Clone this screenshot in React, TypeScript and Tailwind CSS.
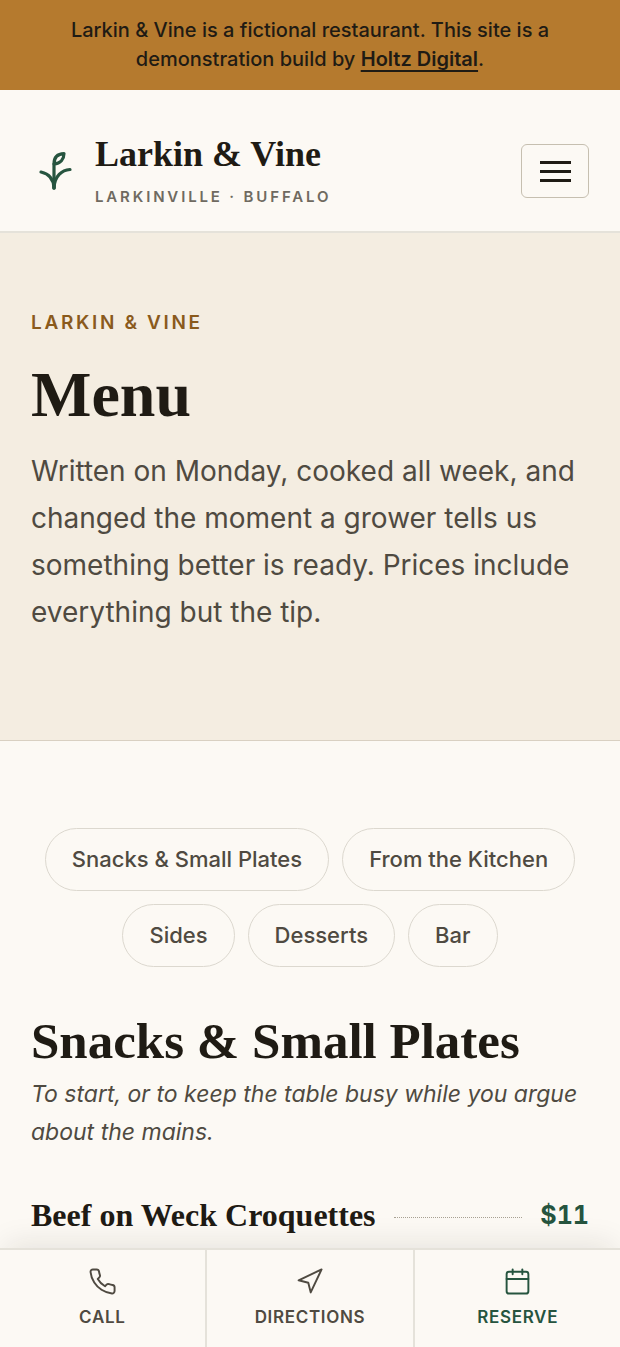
import React from 'react';
import { FiCalendar, FiNavigation, FiPhone } from 'react-icons/fi';
import type { IconType } from 'react-icons';

interface MenuItem {
  name: string;
  price: string;
}

interface QuickAction {
  label: string;
  href: string;
  icon: IconType;
  className: string;
}

const categories = [
  { label: 'Snacks & Small Plates', href: '#snacks' },
  { label: 'From the Kitchen', href: '#kitchen' },
  { label: 'Sides', href: '#sides' },
  { label: 'Desserts', href: '#desserts' },
  { label: 'Bar', href: '#bar' },
];

const snacks: MenuItem[] = [{ name: 'Beef on Weck Croquettes', price: '$11' }];

const quickActions: QuickAction[] = [
  { label: 'Call', href: '#call', icon: FiPhone, className: 'border-r-2 text-[#4f4a41]' },
  { label: 'Directions', href: '#directions', icon: FiNavigation, className: 'text-[#4f4a41]' },
  { label: 'Reserve', href: '#reserve', icon: FiCalendar, className: 'border-l-2 text-[#26543f]' },
];

const SproutLogo = () => (
  <svg
    className="w-[46px] h-[46px] shrink-0"
    viewBox="0 0 46 46"
    fill="none"
    stroke="#26543f"
    strokeWidth="3.2"
    strokeLinecap="round"
    strokeLinejoin="round"
    aria-hidden="true"
  >
    <path d="M23 40V16" />
    <path d="M23 16C23 9.500 26.500 5.800 33 5.600C33 11 29.500 15.500 23 16Z" />
    <path d="M10 24C17 25.500 22.500 30.500 23 40" />
    <path d="M39 21.500C31 22 23.500 28 23 40" />
  </svg>
);

const DemoBanner = () => (
  <div className="bg-[#b57a2e] px-10 py-4 text-center text-[20px] leading-[29px] font-medium text-[#1f1b14]">
    Larkin &amp; Vine is a fictional restaurant. This site is a demonstration build by{' '}
    <a href="#holtz" className="font-semibold underline decoration-2 underline-offset-4">
      Holtz Digital
    </a>
    .
  </div>
);

const SiteHeader = () => (
  <header className="flex items-center justify-between border-b-2 border-[#e5e2da] px-[31px] pt-[41px] pb-5">
    <a href="#home" className="flex items-center gap-[18px]">
      <SproutLogo />
      <span className="flex flex-col gap-[6px]">
        <span className="font-['Liberation_Serif',serif] text-[36px] leading-[46px] font-bold">
          Larkin &amp; Vine
        </span>
        <span className="text-[15px] leading-7 font-semibold tracking-[0.19em] uppercase text-[#6f6a60]">
          Larkinville · Buffalo
        </span>
      </span>
    </a>
    <button
      type="button"
      aria-label="Open menu"
      className="flex h-[54px] w-[68px] flex-col items-center justify-center gap-[6px] rounded-md border border-[#c6bfb0]"
    >
      <span className="h-[3px] w-[31px] bg-[#1f1b14]" />
      <span className="h-[3px] w-[31px] bg-[#1f1b14]" />
      <span className="h-[3px] w-[31px] bg-[#1f1b14]" />
    </button>
  </header>
);

const Hero = () => (
  <section className="border-b border-[#d9d0c2] bg-[#f4ede1] px-[31px] pt-[75px] pb-[104px]">
    <p className="text-[19px] leading-[30px] font-semibold tracking-[0.14em] uppercase text-[#8a5a1c]">
      Larkin &amp; Vine
    </p>
    <h1 className="mt-[22px] font-['Liberation_Serif',serif] text-[64px] leading-[70px] font-bold">Menu</h1>
    <p className="mt-[18px] text-[28px] leading-[47px] text-[#4f4a41]">
      Written on Monday, cooked all week, and changed the moment a grower tells us something better
      is ready. Prices include everything but the tip.
    </p>
  </section>
);

const CategoryNav = () => (
  <nav aria-label="Menu sections" className="flex flex-wrap justify-center gap-[13px]">
    {categories.map((category) => (
      <a
        key={category.href}
        href={category.href}
        className="rounded-full border border-[#dcd8cf] px-[26px] py-[14px] text-[22px] leading-[33px] font-medium text-[#4f4a41]"
      >
        {category.label}
      </a>
    ))}
  </nav>
);

const MenuRow = ({ name, price }: MenuItem) => (
  <li className="flex items-center gap-[18px]">
    <h3 className="font-['Liberation_Serif',serif] text-[32px] leading-10 font-bold">{name}</h3>
    <span className="mt-1 flex-1 border-b border-dotted border-[#a8a193]" />
    <span className="text-[25px] leading-10 font-bold tabular-nums text-[#26543f]">{price}</span>
  </li>
);

const QuickBar = () => (
  <nav
    aria-label="Quick actions"
    className="sticky bottom-0 mt-auto grid grid-cols-3 border-t-2 border-[#e5e2da] bg-[#fcf9f4] shadow-[0_-10px_30px_-6px_rgba(31,27,20,0.1)]"
  >
    {quickActions.map(({ label, href, icon: Icon, className }) => (
      <a
        key={label}
        href={href}
        className={`flex flex-col items-center gap-[10px] border-[#e5e2da] pt-[17px] pb-[19px] text-[17px] leading-[22px] font-semibold tracking-[0.04em] uppercase ${className}`}
      >
        <Icon size={29} strokeWidth={1.6} />
        {label}
      </a>
    ))}
  </nav>
);

export default function App() {
  return (
    <div className="flex min-h-screen flex-col bg-[#fcf9f4] font-['Inter',sans-serif] text-[#1f1b14]">
      <DemoBanner />
      <SiteHeader />
      <main>
        <Hero />
        <div className="px-[31px] pt-[87px]">
          <CategoryNav />
          <section id="snacks" className="pt-11">
            <h2 className="font-['Liberation_Serif',serif] text-[51px] leading-[60px] font-bold">
              Snacks &amp; Small Plates
            </h2>
            <p className="mt-1 text-[23px] leading-[38px] text-[#4f4a41] italic">
              To start, or to keep the table busy while you argue about the mains.
            </p>
            <ul className="mt-11">
              {snacks.map((item) => (
                <MenuRow key={item.name} {...item} />
              ))}
            </ul>
          </section>
        </div>
      </main>
      <QuickBar />
    </div>
  );
}
